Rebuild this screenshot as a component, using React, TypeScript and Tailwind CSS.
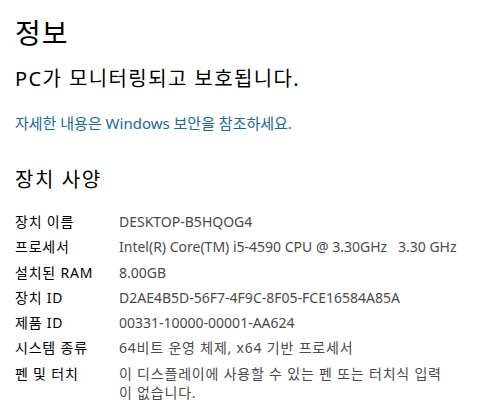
import React from "react";

interface SpecRow {
    label: string;
    value: string;
    korean?: boolean;
    nowrap?: boolean;
}

const specs: SpecRow[] = [
    { label: "장치 이름", value: "DESKTOP-B5HQOG4" },
    { label: "프로세서", value: "Intel(R) Core(TM) i5-4590 CPU @ 3.30GHz   3.30 GHz", nowrap: true },
    { label: "설치된 RAM", value: "8.00GB" },
    { label: "장치 ID", value: "D2AE4B5D-56F7-4F9C-8F05-FCE16584A85A" },
    { label: "제품 ID", value: "00331-10000-00001-AA624" },
    { label: "시스템 종류", value: "64비트 운영 체제, x64 기반 프로세서", korean: true },
    { label: "펜 및 터치", value: "이 디스플레이에 사용할 수 있는 펜 또는 터치식 입력이 없습니다.", korean: true },
];

export default function App() {
    return (
        <div className="w-[501px] h-[416px] bg-white overflow-hidden px-[15px] pt-[13px] font-['Noto_Sans','Noto_Sans_CJK_KR',sans-serif] text-black">
            <h1 className="text-[28px] leading-[40px] font-normal tracking-[1px]">정보</h1>
            <h2 className="mt-[12px] text-[20px] leading-[28px] font-normal tracking-[1.4px]">PC가 모니터링되고 보호됩니다.</h2>
            <p className="mt-[19px] text-[15px] leading-[22px] text-[#16699a]">
                자세한 내용은 Windows 보안을 참조하세요.
            </p>
            <h2 className="mt-[32px] text-[20px] leading-[28px] font-normal tracking-[1.6px]">장치 사양</h2>
            <div className="mt-[18px] grid grid-cols-[104px_336px] gap-y-[6.3px] text-[14px] leading-[19px]">
                {specs.map((row) => (
                    <React.Fragment key={row.label}>
                        <div className="text-black tracking-[0.8px]">{row.label}</div>
                        <div
                            className={`text-[#4a4a4a] ${row.korean ? "tracking-[0.8px]" : ""} ${
                                row.nowrap ? "whitespace-pre" : "whitespace-pre-wrap"
                            }`}
                        >
                            {row.value}
                        </div>
                    </React.Fragment>
                ))}
            </div>
        </div>
    );
}
